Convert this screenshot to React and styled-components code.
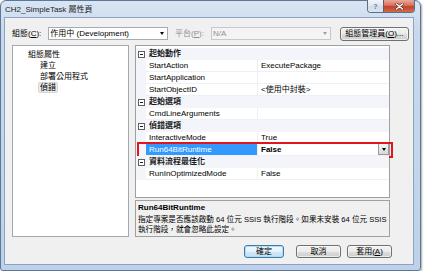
import React from "react";
import styled, { createGlobalStyle } from "styled-components";

const GlobalStyle = createGlobalStyle`
  html, body {
    margin: 0;
    padding: 0;
    background: #ffffff;
  }
  body {
    font-family: "Liberation Sans", "Noto Sans CJK TC", sans-serif;
    font-size: 8px;
    color: #000;
  }
  * { box-sizing: border-box; }
`;

const Window = styled.div`
  width: 421px;
  height: 271px;
  border: 1px solid #5d7896;
  border-radius: 6px 6px 3px 3px;
  background: linear-gradient(to bottom, #d9e5f3 0px, #c8d9ed 30px, #bdd2ea 100%);
  box-shadow: 1px 1px 2px rgba(0, 0, 0, 0.35);
  padding: 0 6px 5px 3px;
  display: flex;
  flex-direction: column;
`;

const TitleBar = styled.div`
  height: 16px;
  display: flex;
  align-items: flex-start;
`;

const Title = styled.div`
  padding: 3px 0 0 1px;
  line-height: 11px;
  color: #1c1c1c;
`;

const CaptionGroup = styled.div`
  margin: -1px -1px 0 auto;
  display: flex;
  height: 13px;
  border: 1px solid #5b6f88;
  border-top: none;
  border-radius: 0 0 4px 4px;
  overflow: hidden;
`;

const CaptionButton = styled.div`
  width: ${(p) => p.$w}px;
  display: flex;
  align-items: center;
  justify-content: center;
  background: ${(p) =>
    p.$close
      ? "linear-gradient(to bottom, #e9a99b 0%, #d7705c 45%, #c3432a 55%, #d06a4c 100%)"
      : "linear-gradient(to bottom, #f1f5fa 0%, #dfe8f3 45%, #cfdcec 55%, #dae5f1 100%)"};
  border-left: ${(p) => (p.$close ? "1px solid #6b5a5a" : "none")};
  color: #6e7c8e;
  font-size: 7px;
  font-weight: bold;
`;

const Client = styled.div`
  flex: 1;
  background: #f0f0f0;
  border: 1px solid #8ea4be;
  padding: 9px 4px 6px 7px;
  display: flex;
  flex-direction: column;
`;

const TopRow = styled.div`
  height: 13px;
  display: flex;
  align-items: center;
`;

const Label = styled.span`
  color: ${(p) => (p.$disabled ? "#8f8f8f" : "#000")};
  margin: ${(p) => (p.$disabled ? "0 7px 0 7px" : "0 7px 0 0")};
  white-space: nowrap;
  line-height: 11px;
`;

const Combo = styled.div`
  width: 121px;
  height: 13px;
  border: 1px solid ${(p) => (p.$disabled ? "#c8c9cc" : "#a9abb2")};
  background: ${(p) => (p.$disabled ? "#f4f4f4" : "#ffffff")};
  color: ${(p) => (p.$disabled ? "#8f8f8f" : "#000")};
  display: flex;
  align-items: center;
  padding: 0 3px 0 1px;
  line-height: 11px;
  white-space: nowrap;
`;

const ComboText = styled.span`
  flex: 1;
`;

const Arrow = styled.span`
  width: 0;
  height: 0;
  border-left: 2.5px solid transparent;
  border-right: 2.5px solid transparent;
  border-top: 3px solid ${(p) => (p.$color ? p.$color : "#000")};
`;

const Button = styled.div`
  width: ${(p) => p.$w}px;
  height: ${(p) => p.$h || 13}px;
  border: 1px solid ${(p) => (p.$default ? "#3d7bad" : "#707070")};
  border-radius: 3px;
  background: ${(p) =>
    p.$default
      ? "linear-gradient(to bottom, #f1f8fd 0%, #e3f2fc 50%, #cfe8f9 50%, #c2e1f7 100%)"
      : "linear-gradient(to bottom, #f2f2f2 0%, #ebebeb 50%, #dddddd 50%, #cfcfcf 100%)"};
  box-shadow: inset 0 0 0 1px ${(p) => (p.$default ? "rgba(170, 220, 245, 0.9)" : "rgba(255, 255, 255, 0.6)")};
  margin-left: ${(p) => p.$ml || 0}px;
  margin-right: ${(p) => p.$mr || 0}px;
  display: flex;
  align-items: center;
  justify-content: center;
  line-height: 11px;
  white-space: nowrap;
`;

const Main = styled.div`
  height: 192px;
  margin: 5px 19px 0 0;
  display: flex;
  gap: 6px;
`;

const Tree = styled.div`
  width: 117px;
  border: 1px solid #a3a8b0;
  background: #fff;
  padding-top: 3px;
`;

const TreeItem = styled.div`
  height: 11px;
  line-height: 11px;
  padding-left: ${(p) => p.$indent}px;
`;

const Selected = styled.span`
  display: inline-block;
  margin-left: -2px;
  padding: 0 1px;
  height: 11px;
  line-height: 9px;
  background: #ebebeb;
  border: 1px solid #d6d6d6;
  border-radius: 2px;
`;

const RightCol = styled.div`
  width: 255px;
  display: flex;
  flex-direction: column;
  gap: 2px;
`;

const Grid = styled.div`
  height: 153px;
  border: 1px solid #a0a0a0;
  background: #fff;
  padding-top: 2px;
`;

const Row = styled.div`
  position: relative;
  height: 12px;
  display: grid;
  grid-template-columns: 10px 112px 1fr;
  line-height: 11px;
`;

const Margin = styled.div`
  background: #f3f5fa;
  display: flex;
  align-items: center;
  justify-content: center;
`;

const CategoryCell = styled.div`
  grid-column: 2 / 4;
  background: #f3f5fa;
  padding-left: 3px;
  font-weight: bold;
  color: #1a1a1a;
`;

const Collapse = styled.span`
  width: 7px;
  height: 7px;
  border: 1px solid #606060;
  background: #fff;
  display: flex;
  align-items: center;
  justify-content: center;
  &::after {
    content: "";
    width: 3px;
    height: 1px;
    background: #202020;
  }
`;

const NameCell = styled.div`
  padding-left: 3px;
  border-bottom: 1px solid #edf0f5;
  border-right: 1px solid #edf0f5;
  background: ${(p) => (p.$selected ? "#3399ff" : "#fff")};
  color: ${(p) => (p.$selected ? "#fff" : "#000")};
  white-space: nowrap;
  overflow: hidden;
`;

const ValueCell = styled.div`
  padding-left: 3px;
  border-bottom: 1px solid #edf0f5;
  display: flex;
  align-items: flex-start;
  font-weight: ${(p) => (p.$bold ? "bold" : "normal")};
  white-space: nowrap;
`;

const ValueText = styled.span`
  flex: 1;
`;

const DropButton = styled.span`
  width: 11px;
  height: 12px;
  margin-top: -1px;
  border: 1px solid #9a9a9a;
  background: linear-gradient(to bottom, #f4f4f4, #d8d8d8);
  display: flex;
  align-items: center;
  justify-content: center;
`;

const Highlight = styled.div`
  position: absolute;
  left: 1px;
  right: -4px;
  top: -2px;
  bottom: -2px;
  border: 2px solid #e2151f;
  pointer-events: none;
`;

const Description = styled.div`
  flex: 1;
  border: 1px solid #a0a0a0;
  background: #f0f0f0;
  padding: 1px 2px;
  white-space: nowrap;
  overflow: hidden;
`;

const DescTitle = styled.div`
  line-height: 12px;
  font-weight: bold;
  margin-bottom: 1px;
`;

const DescText = styled.div`
  line-height: 10px;
  font-size: 7.6px;
`;

const ButtonRow = styled.div`
  height: 13px;
  margin: 8px 17px 0 0;
  display: flex;
  justify-content: flex-end;
  gap: 6px;
`;

const U = styled.span`
  text-decoration: underline;
`;

const groups = [
  {
    name: "起始動作",
    props: [
      ["StartAction", "ExecutePackage"],
      ["StartApplication", ""],
      ["StartObjectID", "<使用中封裝>"],
    ],
  },
  { name: "起始選項", props: [["CmdLineArguments", ""]] },
  {
    name: "偵錯選項",
    props: [
      ["InteractiveMode", "True"],
      ["Run64BitRuntime", "False", true],
    ],
  },
  { name: "資料流程最佳化", props: [["RunInOptimizedMode", "False"]] },
];

export default function App() {
  return (
    <>
      <GlobalStyle />
      <Window>
        <TitleBar>
          <Title>CH2_SimpleTask 屬性頁</Title>
          <CaptionGroup>
            <CaptionButton $w={15}>?</CaptionButton>
            <CaptionButton $w={31} $close>
              <svg width="9" height="7" viewBox="0 0 9 7">
                <path d="M1.5 1 L7.5 6 M7.5 1 L1.5 6" stroke="#5a2a22" strokeWidth="2.6" strokeLinecap="round" />
                <path d="M1.5 1 L7.5 6 M7.5 1 L1.5 6" stroke="#ffffff" strokeWidth="1.5" strokeLinecap="round" />
              </svg>
            </CaptionButton>
          </CaptionGroup>
        </TitleBar>

        <Client>
          <TopRow>
            <Label>組態(<U>C</U>):</Label>
            <Combo>
              <ComboText>作用中 (Development)</ComboText>
              <Arrow />
            </Combo>
            <Label $disabled>平台(<U>P</U>):</Label>
            <Combo $disabled>
              <ComboText>N/A</ComboText>
              <Arrow $color="#a0a0a0" />
            </Combo>
            <Button $w={70} $h={14} $ml={9}>
              組態管理員(<U>O</U>)...
            </Button>
          </TopRow>

          <Main>
            <Tree>
              <TreeItem $indent={15}>組態屬性</TreeItem>
              <TreeItem $indent={27}>建立</TreeItem>
              <TreeItem $indent={27}>部署公用程式</TreeItem>
              <TreeItem $indent={27}>
                <Selected>偵錯</Selected>
              </TreeItem>
            </Tree>

            <RightCol>
              <Grid>
                {groups.map((g) => (
                  <React.Fragment key={g.name}>
                    <Row>
                      <Margin>
                        <Collapse />
                      </Margin>
                      <CategoryCell>{g.name}</CategoryCell>
                    </Row>
                    {g.props.map(([name, value, selected]) => (
                      <Row key={name}>
                        <Margin />
                        <NameCell $selected={selected}>{name}</NameCell>
                        <ValueCell $bold={selected}>
                          <ValueText>{value}</ValueText>
                          {selected && (
                            <DropButton>
                              <Arrow />
                            </DropButton>
                          )}
                        </ValueCell>
                        {selected && <Highlight />}
                      </Row>
                    ))}
                  </React.Fragment>
                ))}
              </Grid>
              <Description>
                <DescTitle>Run64BitRuntime</DescTitle>
                <DescText>指定專案是否應該啟動 64 位元 SSIS 執行階段。如果未安裝 64 位元 SSIS</DescText>
                <DescText>執行階段，就會忽略此設定。</DescText>
              </Description>
            </RightCol>
          </Main>

          <ButtonRow>
            <Button $w={40} $default $mr={6}>確定</Button>
            <Button $w={45}>取消</Button>
            <Button $w={45}>
              套用(<U>A</U>)
            </Button>
          </ButtonRow>
        </Client>
      </Window>
    </>
  );
}
